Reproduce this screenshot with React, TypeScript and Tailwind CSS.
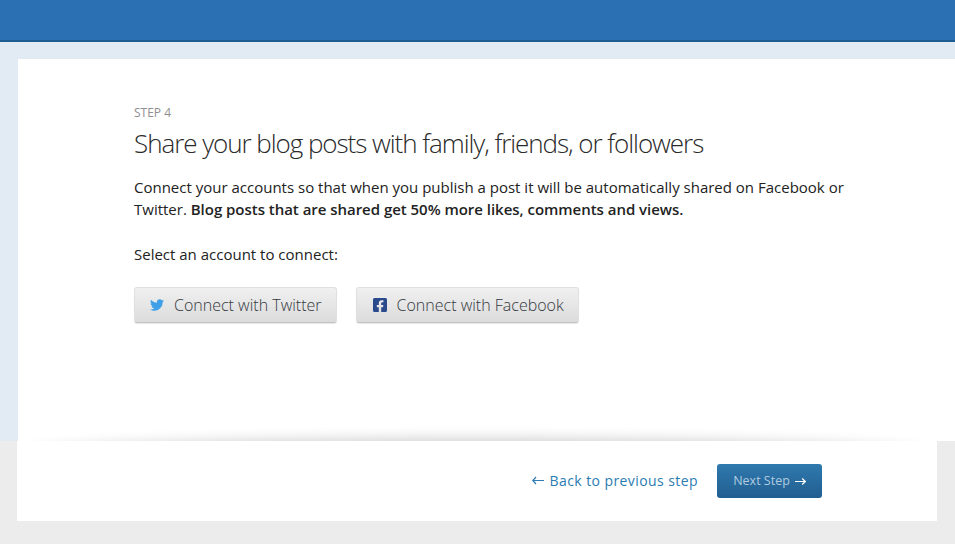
import { FaFacebookSquare, FaTwitter } from 'react-icons/fa';

function ConnectButton({ icon, label }: { icon: React.ReactNode; label: string }) {
  return (
    <button className="h-9 flex items-center rounded-[3px] border border-[#e0e0e0] border-b-[#c4c4c4] bg-gradient-to-b from-[#f0f0f0] to-[#dcdcdc] pl-[15px] pr-[14px] text-[16px] font-light text-[#33383e] shadow-[0_1px_1px_rgba(0,0,0,0.1)]">
      {icon}
      <span>{label}</span>
    </button>
  );
}

export default function App() {
  return (
    <div className="w-[955px] h-[544px] overflow-hidden bg-[#ececec] font-['Open_Sans',sans-serif] text-[#222]">
      {/* Top bar */}
      <header className="h-[42px] bg-[#2b70b2] border-b-2 border-[#1f5c92]"></header>

      {/* Step content */}
      <div className="h-[399px] bg-[#e2eaf3] pt-[17px] pl-[18px]">
        <main className="h-[382px] bg-white pl-[116px] pt-[46px]">
          <div className="text-[12px] leading-[15px] text-[#8f8f8f]">STEP 4</div>
          <h1 className="mt-[7px] text-[26px] leading-[32px] font-light tracking-[-1.05px] text-[#2a2a2a]">
            Share your blog posts with family, friends, or followers
          </h1>
          <p className="mt-[17px] w-[725px] text-[15px] leading-[22px]">
            Connect your accounts so that when you publish a post it will be automatically shared on Facebook or Twitter.{' '}
            <b className="font-semibold tracking-[-0.03px]">Blog posts that are shared get 50% more likes, comments and views.</b>
          </p>
          <p className="mt-[23px] text-[15px] leading-[22px]">Select an account to connect:</p>
          <div className="mt-[22px] flex gap-[19px]">
            <ConnectButton icon={<FaTwitter className="mr-[10px] w-[14px] h-[14px] text-[#3fa0e8]" />} label="Connect with Twitter" />
            <ConnectButton icon={<FaFacebookSquare className="mr-[9px] w-[16px] h-[16px] text-[#2b4a8b]" />} label="Connect with Facebook" />
          </div>
        </main>
      </div>

      {/* Footer actions */}
      <footer className="relative ml-[17px] w-[920px] h-20 bg-white flex items-center justify-end pr-[115px] pb-[1px]">
        {/* Shadow cast upward over the panel */}
        <div className="absolute left-0 right-0 -top-[24px] h-[24px] overflow-hidden pointer-events-none">
          <div className="absolute left-[10px] right-[10px] top-[24px] h-[30px] rounded-[50%] shadow-[0_-2px_14px_rgba(0,0,0,0.2)]"></div>
        </div>
        <a className="flex items-center text-[14px] tracking-[0.42px] text-[#2a7cb3]">
          <svg width="12" height="9" viewBox="0 0 12 9" fill="none" stroke="currentColor" strokeWidth="1.2" className="mr-[6px]">
            <path d="M0.5 4.5H12M4 1L0.8 4.5L4 8" />
          </svg>
          Back to previous step
        </a>
        <button className="ml-[19px] h-[34px] w-[105px] flex items-center justify-center rounded-[3px] bg-gradient-to-b from-[#2f79ae] to-[#225e90] pt-[2px] text-[12.5px] text-[#b0cbe0]">
          Next Step
          <svg width="11" height="9" viewBox="0 0 11 9" fill="none" stroke="#ffffff" strokeWidth="1.2" className="ml-[5px]">
            <path d="M0 4.5H10.5M7.2 1.5L10.3 4.5L7.2 7.5" />
          </svg>
        </button>
      </footer>
    </div>
  );
}
